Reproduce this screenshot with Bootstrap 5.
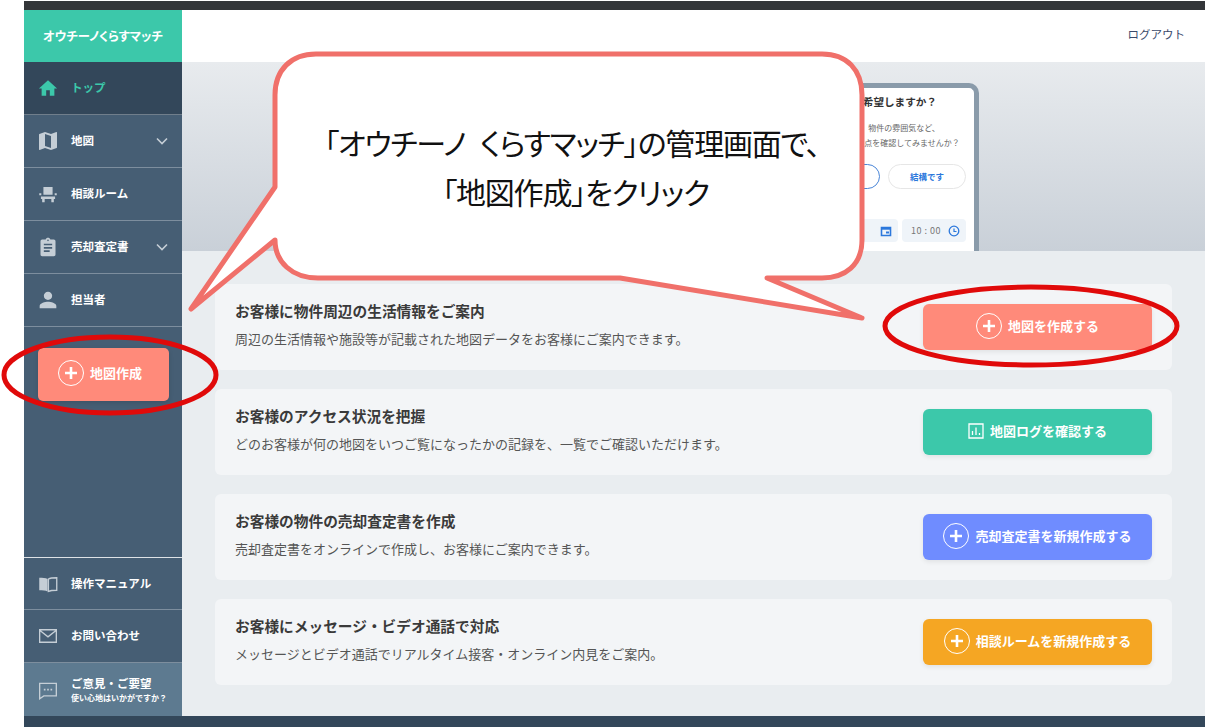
<!DOCTYPE html>
<html lang="ja">
<head>
<meta charset="utf-8">
<title>オウチーノ くらすマッチ</title>
<link href="https://cdn.jsdelivr.net/npm/bootstrap@5.3.0/dist/css/bootstrap.min.css" rel="stylesheet">
<style>
html,body{height:100%;background:#fff;overflow:hidden}
body{font-family:"Noto Sans CJK JP","Noto Sans",sans-serif}
.shell{position:relative;height:728px;padding:1px 1px 1px 24px}
.topstrip{height:9px;background:#333639}
.botstrip{height:11px;background:#33475a}
.mainrow{height:706px}
.side{width:158px;background:#465e74}
.logo{height:52px;background:#3cc8aa;color:#fff;font-size:12.3px;font-weight:700;font-feature-settings:"palt"}
.sitem{height:53px;padding-left:14px;padding-right:14px;color:#fff;font-size:11.5px;font-weight:700;border-bottom:1px solid rgba(255,255,255,.3);text-decoration:none}
.sitem:hover{color:#fff}
.sitem .ic{width:20px;height:20px;fill:#c5ced6;flex:none;margin-right:13px}
.sitem .st{fill:none;stroke:#c5ced6;stroke-width:1.6}
.sitem.act{background:#33475a;color:#3cc8aa}
.sitem.act .ic{fill:#3cc8aa}
.sitem.lite{background:#5d7a90;border-bottom:0}
.chev{width:12px;height:12px;fill:none;stroke:#c5ced6;stroke-width:1.6}
.subt{font-size:8px;line-height:12px;white-space:nowrap}
.ttl2{line-height:16px;margin-bottom:1px}
.sidebtnwrap{padding:21px 13px 0 14px}
.mapbtn{height:53px;background:#ff8a7a;border:0;border-radius:5px;color:#fff;font-size:13px;font-weight:700;padding:0 7px 4px 0;gap:6px;box-shadow:0 2px 5px rgba(0,0,0,.12)}
.mapbtn:hover{background:#ff8a7a;color:#fff}
.plusic{width:26px;height:26px;flex:none;fill:none;stroke:#fff}
.chartic{width:16px;height:16px;flex:none;fill:none;stroke:#fff;stroke-width:1.3}
.topb{height:52px;background:#fff;padding-right:20px;padding-bottom:2px}
.logout{color:#3a4a6b;font-size:11.5px;text-decoration:none}
.hero{height:189px;background:linear-gradient(180deg,#e8ebee,#c9d0d8);padding:21px 226px 0 0;overflow:hidden}
.phone{width:280px;height:168px;background:#fff;border:5px solid #8a9baa;border-bottom:0;border-radius:10px 10px 0 0;padding:0 8px 0 98px;text-align:center}
.ptitle{font-size:10.6px;font-weight:700;color:#333;margin-top:7px;line-height:14px}
.ptext{font-size:8px;line-height:14.5px;color:#666;margin-top:12px;white-space:nowrap}
.prow1{margin-top:14px}
.prow2{margin-top:30px}
.pbtn{height:25px;border-radius:13px;background:#fff;font-size:8.5px;font-weight:700;color:#2c78dc}
.pbtn.a{width:78px;border:1px solid #e6e6e6}
.pbtn.b{width:78px;border:1px solid #4a86d8}
.pfld{height:23px;border-radius:4px;background:#eff4f9;font-size:9px;color:#777;letter-spacing:.5px;padding:0 6px 0 9px}
.pfld.t{width:64px}
.pfld.d{width:80px}
.pic{width:12px;height:12px;fill:none;stroke:#2c78dc;stroke-width:2}
.content{background:#e9edf0;padding:33px 33px 0 33px}
.band{height:86px;background:#f3f5f7;border-radius:6px;padding:0 20px;margin-bottom:19px;border:0}
.bandtxt{margin-bottom:5px}
.band h2{font-size:14.7px;font-weight:700;color:#3a3a3a;margin:0 0 10px;line-height:18px}
.band p{font-size:13px;color:#555;margin:0;line-height:18px}
.act-btn{width:229px;height:46px;border:0;border-radius:6px;color:#fff;font-size:13px;font-weight:700;padding:0 0 2px;gap:6px;box-shadow:0 2px 5px rgba(0,0,0,.08)}
.act-btn:hover{color:#fff}
.c-red,.c-red:hover{background:#ff8a7a}
.c-green,.c-green:hover{background:#3cc8aa}
.c-blue,.c-blue:hover{background:#6f8cff}
.c-orange,.c-orange:hover{background:#f5a623}
.overlay{position:absolute;left:0;top:0;width:1206px;height:728px;pointer-events:none}
.balloon{position:absolute;left:272px;top:118px;width:600px;text-align:center;color:#111;font-size:30px;letter-spacing:-1.2px;line-height:49px;font-family:"Noto Sans CJK JP",sans-serif;font-feature-settings:"palt"}
.wordgap{margin-left:9px}
.line2{padding-left:7px}
</style>
</head>
<body>
<div class="shell d-flex flex-column">
  <div class="topstrip"></div>
  <div class="mainrow d-flex">
    <aside class="side d-flex flex-column">
      <div class="logo d-flex align-items-center justify-content-center">オウチーノくらすマッチ</div>
      <a class="sitem act d-flex align-items-center" href="#"><svg class="ic" viewBox="1 1.5 22 20"><path d="M10 20v-6h4v6h5v-8h3L12 3 2 12h3v8z"/></svg>トップ</a>
      <a class="sitem d-flex align-items-center" href="#"><svg class="ic" viewBox="2 2 20 20"><path d="M20.5 3l-.16.03L15 5.1 9 3 3.36 4.9c-.21.07-.36.25-.36.48V20.5c0 .28.22.5.5.5l.16-.03L9 18.9l6 2.1 5.64-1.9c.21-.07.36-.25.36-.48V3.5c0-.28-.22-.5-.5-.5zM15 19l-6-2.11V5l6 2.11V19z"/></svg>地図<svg class="chev ms-auto" viewBox="0 0 12 12"><path d="M1 3.5l5 5 5-5"/></svg></a>
      <a class="sitem d-flex align-items-center" href="#"><svg class="ic" viewBox="0 0 24 24"><path d="M6.500 3.500h11V13h-11zM1.500 11h2.500v2.500H1.500zM20 11h2.500v2.500H20zM3.500 15h17v3h-1.500v4h-3v-4H8v4H5v-4H3.500z"/></svg>相談ルーム</a>
      <a class="sitem d-flex align-items-center" href="#"><svg class="ic" viewBox="0 0 24 24"><path d="M19 3h-4.180C14.400 1.840 13.300 1 12 1c-1.300 0-2.400.84-2.820 2H5c-1.100 0-2 .9-2 2v16c0 1.100.9 2 2 2h14c1.100 0 2-.9 2-2V5c0-1.100-.9-2-2-2zm-7 0c.55 0 1 .45 1 1s-.45 1-1 1-1-.45-1-1 .45-1 1-1zm2 15H7v-2h7v2zm3-4H7v-2h10v2zm0-4H7V8h10v2z"/></svg>売却査定書<svg class="chev ms-auto" viewBox="0 0 12 12"><path d="M1 3.5l5 5 5-5"/></svg></a>
      <a class="sitem d-flex align-items-center" href="#"><svg class="ic" viewBox="0 0 24 24"><path d="M12 12c2.800 0 5-2.200 5-5s-2.200-5-5-5-5 2.200-5 5 2.200 5 5 5zm0 2c-3.300 0-10 1.700-10 5v3h20v-3c0-3.300-6.700-5-10-5z"/></svg>担当者</a>
      <div class="sidebtnwrap">
        <button type="button" class="btn mapbtn w-100 d-flex align-items-center justify-content-center"><svg class="plusic" viewBox="0 0 26 26"><circle cx="13" cy="13" r="12.500"/><path d="M7 13h12M13 7v12" stroke-width="2.600"/></svg>地図作成</button>
      </div>
      <div class="mt-auto">
        <a class="sitem d-flex align-items-center border-top" href="#"><svg class="ic" viewBox="0 0 24 24"><path d="M1.500 4.500c4 0 7.500 0 10 1.500v15c-2.500-1.300-6-1.500-10-1.500z"/><path class="st" d="M12.500 6c2.500-1.500 6-1.500 10-1.500v15c-4 0-7.500.2-10 1.500z"/></svg>操作マニュアル</a>
        <a class="sitem d-flex align-items-center" href="#"><svg class="ic" viewBox="0 0 24 24"><path class="st" d="M2 4.500h20v15H2zM2 5l10 8 10-8"/></svg>お問い合わせ</a>
        <a class="sitem lite d-flex align-items-center" href="#"><svg class="ic" viewBox="0 0 24 24"><path class="st" d="M2 4h20v15H7l-5 3.500z"/><path d="M7 10.500h2v2H7zM11 10.500h2v2h-2zM15 10.500h2v2h-2z"/></svg><span class="d-block"><span class="d-block ttl2">ご意見・ご要望</span><span class="d-block subt">使い心地はいかがですか？</span></span></a>
      </div>
    </aside>
    <main class="flex-grow-1 d-flex flex-column">
      <div class="topb d-flex align-items-center justify-content-end"><a class="logout" href="#">ログアウト</a></div>
      <div class="hero d-flex justify-content-end">
        <div class="phone">
          <div class="ptitle">内見を希望しますか？</div>
          <div class="ptext">周辺環境、物件の雰囲気など、<br>現地で気になる点を確認してみませんか？</div>
          <div class="prow1 d-flex justify-content-end gap-2">
            <div class="pbtn b d-flex align-items-center justify-content-center">希望します</div>
            <div class="pbtn a d-flex align-items-center justify-content-center">結構です</div>
          </div>
          <div class="prow2 d-flex justify-content-end gap-1">
            <div class="pfld d d-flex align-items-center justify-content-between">日付<svg class="pic" viewBox="0 0 12 12"><path d="M1.500 2.500h9v8h-9z" stroke-width="1.600"/><path d="M1.500 3.500h9" stroke-width="2.400"/><path d="M6 7.500h3"/></svg></div>
            <div class="pfld t d-flex align-items-center justify-content-between">10 : 00<svg class="pic" viewBox="0 0 12 12"><circle cx="6" cy="6" r="4.800" stroke-width="1.300"/><path d="M6 3.500V6.500H8.500" stroke-width="1.200"/></svg></div>
          </div>
        </div>
      </div>
      <div class="content flex-grow-1">
        <section class="band d-flex align-items-center justify-content-between">
          <div class="bandtxt"><h2>お客様に物件周辺の生活情報をご案内</h2><p>周辺の生活情報や施設等が記載された地図データをお客様にご案内できます。</p></div>
          <button type="button" class="btn act-btn c-red d-flex align-items-center justify-content-center"><svg class="plusic" viewBox="0 0 26 26"><circle cx="13" cy="13" r="12.500"/><path d="M7 13h12M13 7v12" stroke-width="2.600"/></svg>地図を作成する</button>
        </section>
        <section class="band d-flex align-items-center justify-content-between">
          <div class="bandtxt"><h2>お客様のアクセス状況を把握</h2><p>どのお客様が何の地図をいつご覧になったかの記録を、一覧でご確認いただけます。</p></div>
          <button type="button" class="btn act-btn c-green d-flex align-items-center justify-content-center"><svg class="chartic" viewBox="0 0 16 16"><path d="M1 1h14v14H1z"/><path d="M4.500 12V8M8 12V4.500M11.500 12v-2"/></svg>地図ログを確認する</button>
        </section>
        <section class="band d-flex align-items-center justify-content-between">
          <div class="bandtxt"><h2>お客様の物件の売却査定書を作成</h2><p>売却査定書をオンラインで作成し、お客様にご案内できます。</p></div>
          <button type="button" class="btn act-btn c-blue d-flex align-items-center justify-content-center"><svg class="plusic" viewBox="0 0 26 26"><circle cx="13" cy="13" r="12.500"/><path d="M7 13h12M13 7v12" stroke-width="2.600"/></svg>売却査定書を新規作成する</button>
        </section>
        <section class="band d-flex align-items-center justify-content-between">
          <div class="bandtxt"><h2>お客様にメッセージ・ビデオ通話で対応</h2><p>メッセージとビデオ通話でリアルタイム接客・オンライン内見をご案内。</p></div>
          <button type="button" class="btn act-btn c-orange d-flex align-items-center justify-content-center"><svg class="plusic" viewBox="0 0 26 26"><circle cx="13" cy="13" r="12.500"/><path d="M7 13h12M13 7v12" stroke-width="2.600"/></svg>相談ルームを新規作成する</button>
        </section>
      </div>
    </main>
  </div>
  <div class="botstrip"></div>

  <div class="overlay">
    <svg width="1206" height="728" viewBox="0 0 1206 728" class="position-absolute top-0 start-0">
      <path d="M316 54H822C847 54 862 70 862 95V240C862 265 845 278 822 278H767L862 318L620 278H318C292 278 275 262 275 240L191 309L275 187V95C275 70 291 54 316 54Z" fill="#fff" stroke="#f0706a" stroke-width="5" stroke-linejoin="round"/>
      <ellipse cx="110" cy="375" rx="106" ry="38" fill="none" stroke="#e00a0a" stroke-width="5"/>
      <ellipse cx="1031" cy="326" rx="146" ry="39" fill="none" stroke="#e00a0a" stroke-width="5"/>
    </svg>
    <div class="balloon"><div>「オウチーノ <span class="wordgap">くらすマッチ」の管理画面で、</span></div><div class="line2">「地図作成」をクリック</div></div>
  </div>
</div>
<script src="https://cdn.jsdelivr.net/npm/bootstrap@5.3.0/dist/js/bootstrap.bundle.min.js"></script>
</body>
</html>
